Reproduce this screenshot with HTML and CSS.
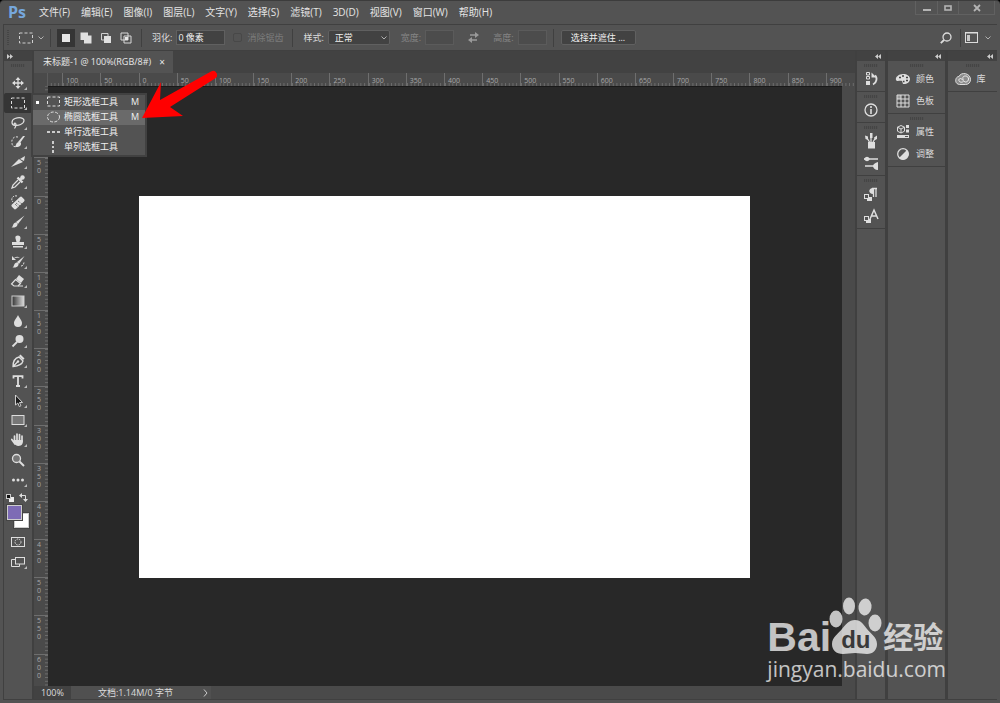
FILE: index.html
```html
<!DOCTYPE html>
<html lang="zh-CN">
<head>
  <meta charset="UTF-8">
  <meta name="viewport" content="width=device-width, initial-scale=1.0">
  <title>未标题-1</title>
  <link rel="stylesheet" href="styles.css">
</head>
<body>
  <div class="app">

    <!-- 标题栏和菜单 -->
    <header class="titlebar">
      <span class="logo">Ps</span>
      <nav class="menu">
        <a href="#">文件(F)</a>
        <a href="#">编辑(E)</a>
        <a href="#">图像(I)</a>
        <a href="#">图层(L)</a>
        <a href="#">文字(Y)</a>
        <a href="#">选择(S)</a>
        <a href="#">滤镜(T)</a>
        <a href="#">3D(D)</a>
        <a href="#">视图(V)</a>
        <a href="#">窗口(W)</a>
        <a href="#">帮助(H)</a>
      </nav>
      <div class="window-buttons">
        <button aria-label="最小化"><svg width="8" height="8" viewBox="0 0 8 8"><path d="M0 6h8" stroke="#b4b4b4" stroke-width="2"/></svg></button>
        <button aria-label="最大化"><svg width="8" height="8" viewBox="0 0 8 8"><rect x="1" y="2" width="6" height="4" fill="none" stroke="#b4b4b4" stroke-width="1.6"/></svg></button>
        <button class="close" aria-label="关闭"><svg width="8" height="8" viewBox="0 0 8 8"><path d="M1 1l6 6M7 1l-6 6" stroke="#b4b4b4" stroke-width="1.8"/></svg></button>
      </div>
    </header>

    <!-- 选项栏 -->
    <div class="options">
      <span class="grip-v"></span>
      <button class="preset" aria-label="工具预设">
        <svg width="14" height="12" viewBox="0 0 14 12"><rect x=".5" y="1" width="13" height="10" fill="none" stroke="#d0d0d0" stroke-dasharray="3 2"/></svg>
        <svg width="6" height="4" viewBox="0 0 6 4"><path d="M.5 .5L3 3 5.500 .5" fill="none" stroke="#b0b0b0"/></svg>
      </button>
      <span class="sep"></span>
      <div class="modes">
        <button class="active" aria-label="新选区"><svg width="12" height="12" viewBox="0 0 12 12"><rect x="2" y="2" width="8" height="8" fill="#e6e6e6"/></svg></button>
        <button aria-label="添加到选区"><svg width="12" height="12" viewBox="0 0 12 12"><path d="M.5 .5h7.500v3h3.500v8H4V8H.5z" fill="#e0e0e0"/></svg></button>
        <button aria-label="从选区减去"><svg width="12" height="12" viewBox="0 0 12 12"><path d="M4 8H1.500V1.500H8V4" fill="none" stroke="#d0d0d0"/><rect x="4" y="4" width="7" height="7" fill="#e0e0e0"/></svg></button>
        <button aria-label="与选区交叉"><svg width="12" height="12" viewBox="0 0 12 12"><path d="M1 1h7v7H1zM4 4h7v7H4z" fill="none" stroke="#d8d8d8"/><rect x="5" y="5" width="3" height="3" fill="#e8e8e8"/></svg></button>
      </div>
      <span class="sep"></span>
      <div class="field">
        <label for="feather">羽化:</label>
        <input type="text" id="feather" class="feather" value="0 像素">
      </div>
      <div class="check">
        <input type="checkbox" id="antialias" disabled>
        <label for="antialias">消除锯齿</label>
      </div>
      <span class="sep"></span>
      <div class="field">
        <label for="style">样式:</label>
        <span class="select">
          <select id="style"><option>正常</option><option>固定比例</option><option>固定大小</option></select>
          <svg width="6" height="4" viewBox="0 0 6 4"><path d="M.5 .5L3 3 5.500 .5" fill="none" stroke="#b0b0b0"/></svg>
        </span>
      </div>
      <div class="size">
        <div class="field off">
          <label for="width">宽度:</label>
          <input type="text" id="width" disabled>
        </div>
        <button class="swap" aria-label="互换" disabled><svg width="11" height="11" viewBox="0 0 11 11"><path d="M2 3h6M3 8h6" stroke="#9a9a9a" stroke-width="1.300"/><path d="M7 0l4 3-4 3zM4 5L0 8l4 3z" fill="#9a9a9a"/></svg></button>
        <div class="field off">
          <label for="height">高度:</label>
          <input type="text" id="height" disabled>
        </div>
      </div>
      <span class="sep"></span>
      <button class="mask-button">选择并遮住 ...</button>
      <div class="options-end">
        <button aria-label="搜索"><svg width="12" height="12" viewBox="0 0 12 12"><circle cx="7" cy="5" r="4" fill="none" stroke="#dcdcdc" stroke-width="1.300"/><path d="M4 8L.8 11.200" stroke="#dcdcdc" stroke-width="1.800"/></svg></button>
        <span class="sep"></span>
        <button class="workspace-button" aria-label="工作区">
          <svg width="13" height="11" viewBox="0 0 13 11"><rect x=".5" y=".5" width="12" height="10" fill="none" stroke="#dcdcdc"/><path d="M0 1h13" stroke="#dcdcdc"/><rect x="2" y="3" width="3" height="6" fill="#c8c8c8"/></svg>
          <svg width="6" height="4" viewBox="0 0 6 4"><path d="M.5 .5L3 3 5.500 .5" fill="none" stroke="#b0b0b0"/></svg>
        </button>
      </div>
    </div>

    <div class="workspace">

      <!-- 工具箱 -->
      <aside class="toolbar">
        <div class="strip left"><svg width="6" height="5" viewBox="0 0 6 5"><path d="M0 0l3 2.500L0 5zM3 0l3 2.500L3 5z" fill="#ccc"/></svg></div>
        <span class="grip"></span>
        <ul class="tools">
          <li><button aria-label="移动工具"><svg viewBox="0 0 16 16"><path d="M8 4v8M4 8h8" stroke="#dedede" stroke-width="1.300"/><path d="M8 2l2.500 3h-5zM8 14l2.500-3h-5zM2 8l3-2.500v5zM14 8l-3-2.500v5z" fill="#dedede"/></svg></button></li>
          <li class="active">
            <button aria-label="选框工具"><svg viewBox="0 0 16 16"><rect x="1.500" y="3" width="13" height="10" fill="none" stroke="#dedede" stroke-dasharray="3 2"/></svg></button>
            <div class="flyout">
              <button>
                <span class="dot"></span>
                <svg width="14" height="12" viewBox="0 0 14 12"><rect x=".5" y="1" width="12" height="9" fill="none" stroke="#ddd" stroke-dasharray="3 2"/></svg>
                <span>矩形选框工具</span><kbd>M</kbd>
              </button>
              <button class="current">
                <span></span>
                <svg width="14" height="12" viewBox="0 0 14 12"><ellipse cx="6.500" cy="6" rx="6" ry="5" fill="none" stroke="#ddd" stroke-dasharray="3 1.500"/></svg>
                <span>椭圆选框工具</span><kbd>M</kbd>
              </button>
              <button>
                <span></span>
                <svg width="14" height="12" viewBox="0 0 14 12"><path d="M0 6h3M5 6h3M10 6h3" stroke="#ccc" stroke-width="2"/></svg>
                <span>单行选框工具</span>
              </button>
              <button>
                <span></span>
                <svg width="14" height="12" viewBox="0 0 14 12"><path d="M6 0v3M6 5v2M6 9v3" stroke="#ccc" stroke-width="2"/></svg>
                <span>单列选框工具</span>
              </button>
            </div>
          </li>
          <li><button aria-label="套索工具"><svg viewBox="0 0 16 16"><path d="M5 10.500C1 10 1 5 5 3.500c4-1.500 9-1 9 2 0 3.500-6 5.500-9 4.500-1.500-.5-1-2 .3-1.800 1.500.5.700 3-.8 5.300" fill="none" stroke="#dedede" stroke-width="1.200"/></svg></button></li>
          <li><button aria-label="快速选择工具"><svg viewBox="0 0 16 16"><path d="M8 3C4 2 1 5 2 9c0 3 2 4 5 4" fill="none" stroke="#dedede" stroke-dasharray="2 1.500"/><path d="M15 2l-5 7-2-1 5-6z" fill="#dedede"/><path d="M9 8c2 0 3 2 1 4-1 1-3 1-5 1 1-1 1-5 4-5z" fill="#dedede"/></svg></button></li>
          <li><button aria-label="裁剪工具"><svg viewBox="0 0 16 16"><path d="M1 13L9 5l4 3z" fill="#dedede"/><path d="M10 5l5-3-1 5z" fill="#dedede"/></svg></button></li>
          <li><button aria-label="吸管工具"><svg viewBox="0 0 16 16"><path d="M8 6L3 11l-1 3 3-1 5-5" fill="none" stroke="#dedede" stroke-width="1.300"/><path d="M7.500 3.500l5 5M10 6l3-3" stroke="#dedede" stroke-width="2.400"/><circle cx="12.500" cy="3.500" r="2.200" fill="#dedede"/></svg></button></li>
          <li><button aria-label="修复画笔工具"><svg viewBox="0 0 16 16"><path d="M7 2C3 1 0 5 3 8" fill="none" stroke="#dedede" stroke-dasharray="2 1"/><rect x="1" y="6" width="14" height="6" rx="1.500" fill="#dedede" transform="rotate(-43 8 9)"/><path d="M6 9l4 3M8 7l4 3M5 10l3 3" stroke="#555" stroke-dasharray="1 1"/></svg></button></li>
          <li><button aria-label="画笔工具"><svg viewBox="0 0 16 16"><path d="M14.500 1.500L8 10 6 8z" fill="#dedede"/><path d="M5.500 8.500c2 0 3 2 1 4-1 1-3 1-5 1 2-1 1-4 4-5z" fill="#dedede"/></svg></button></li>
          <li><button aria-label="仿制图章工具"><svg viewBox="0 0 16 16"><path d="M6 2c2-1.500 5 0 4.500 2.500L9.500 8H14v3H2V8h4.500L5.500 4.500C5.300 3.500 5.300 2.600 6 2zM3 12h10v1.500H3z" fill="#dedede"/></svg></button></li>
          <li><button aria-label="历史记录画笔工具"><svg viewBox="0 0 16 16"><path d="M14.500 2L9 10 7 8z" fill="#dedede"/><path d="M6.500 8.500c2 0 3 2 1 4-1 1-3 1-5 1 2-1 1-4 4-5z" fill="#dedede"/><path d="M2 2v4h4zM4 4c2-1.500 4-1.500 6-.5" fill="#dedede"/><path d="M11 12c2 0 3-2 3-4" fill="none" stroke="#dedede" stroke-dasharray="2 1"/></svg></button></li>
          <li><button aria-label="橡皮擦工具"><svg viewBox="0 0 16 16"><path d="M9 2l5 4-3 4-5-4z" fill="#dedede"/><path d="M5.500 6.500l5 4L8 13H4l-2.500-2z" fill="none" stroke="#dedede" stroke-width="1.200"/><path d="M8 13h5" stroke="#dedede"/></svg></button></li>
          <li><button aria-label="渐变工具"><svg viewBox="0 0 16 16"><defs><linearGradient id="grad"><stop offset="0" stop-color="#333"/><stop offset="1" stop-color="#ddd"/></linearGradient></defs><rect x="2" y="3" width="12" height="10" fill="url(#grad)" stroke="#ccc"/></svg></button></li>
          <li><button aria-label="模糊工具"><svg viewBox="0 0 16 16"><path d="M8 2c1 3 4 5 4 8a4 4 0 01-8 0c0-3 3-5 4-8z" fill="#dedede"/></svg></button></li>
          <li><button aria-label="减淡工具"><svg viewBox="0 0 16 16"><circle cx="9.500" cy="6" r="4" fill="#dedede"/><path d="M7 9l-4.500 4.500" stroke="#dedede" stroke-width="1.800"/></svg></button></li>
          <li><button aria-label="钢笔工具"><svg viewBox="0 0 16 16"><path d="M3 13.500C3 9 5 5 9 4l4 4c-1 4-5 5-10 5.500zL8 8.500" fill="none" stroke="#dedede" stroke-width="1.300"/><circle cx="8" cy="8.500" r="1.200" fill="#dedede"/><path d="M9 3l1.500-1.500 4 4L13 7z" fill="#dedede"/></svg></button></li>
          <li><button aria-label="文字工具"><svg viewBox="0 0 16 16"><path d="M3.500 5.500V3.200h9v2.300M8 3v10M6 13h4" fill="none" stroke="#dedede" stroke-width="1.800"/></svg></button></li>
          <li><button aria-label="路径选择工具"><svg viewBox="0 0 16 16"><path d="M5.500 2v10l2.300-2 1.500 3.500 1.600-.7L9.500 9.500h3z" fill="#1c1c1c" stroke="#dedede" stroke-width=".9"/></svg></button></li>
          <li><button aria-label="矩形工具"><svg viewBox="0 0 16 16"><rect x="2" y="3.500" width="12" height="9" fill="#777" stroke="#dedede"/></svg></button></li>
          <li><button aria-label="抓手工具"><svg viewBox="0 0 16 16"><path d="M4.500 9V4M7 8V2M9.500 8V2.500M12 8V4M5 12L1.800 7.500" stroke="#dedede" stroke-width="1.700" stroke-linecap="round"/><path d="M3.700 8h9.200c.5 3-1 6-4.400 6C6 14 4.500 12 3.700 10z" fill="#dedede"/></svg></button></li>
          <li class="plain"><button aria-label="缩放工具"><svg viewBox="0 0 16 16"><circle cx="6.500" cy="6.500" r="4" fill="#777" stroke="#dedede" stroke-width="1.300"/><path d="M9.500 9.500l4.500 4.500" stroke="#dedede" stroke-width="2"/></svg></button></li>
          <li><button aria-label="编辑工具栏"><svg viewBox="0 0 16 16"><g fill="#dedede"><circle cx="3.500" cy="8" r="1.500"/><circle cx="8" cy="8" r="1.500"/><circle cx="12.500" cy="8" r="1.500"/></g></svg></button></li>
        </ul>
        <div class="colors">
          <div class="color-buttons">
            <button aria-label="默认颜色"><svg width="8" height="8" viewBox="0 0 8 8"><rect x="3" y="3" width="5" height="5" fill="#eee"/><rect x=".5" y=".5" width="4" height="4" fill="#111" stroke="#ccc"/></svg></button>
            <button aria-label="切换颜色"><svg width="9" height="9" viewBox="0 0 9 9"><path d="M2 2.500h4.500V7" fill="none" stroke="#dedede"/><path d="M3 0v5L0 2.500zM4 6h5L6.500 9z" fill="#dedede"/></svg></button>
          </div>
          <div class="swatches">
            <button class="background" aria-label="背景色"></button>
            <button class="foreground" aria-label="前景色"></button>
          </div>
        </div>
        <ul class="tools modes-list">
          <li class="plain"><button aria-label="快速蒙版"><svg viewBox="0 0 16 16"><rect x="1.500" y="3.500" width="13" height="9" fill="none" stroke="#dedede"/><circle cx="8" cy="8" r="3" fill="none" stroke="#dedede" stroke-dasharray="1.500 1"/></svg></button></li>
          <li><button aria-label="屏幕模式"><svg viewBox="0 0 16 16"><path d="M5 5.500H1.500v7h8V10" fill="none" stroke="#dedede"/><rect x="5.500" y="3.500" width="9" height="6.500" fill="#535353" stroke="#dedede"/></svg></button></li>
        </ul>
      </aside>

      <!-- 文档 -->
      <main class="document">
        <div class="tabs">
          <div class="tab"><span>未标题-1 @ 100%(RGB/8#)</span><button aria-label="关闭文档">×</button></div>
        </div>
        <div class="ruler-corner"></div>
        <div class="ruler ruler-x"><div class="track" id="ruler-x"></div></div>
        <div class="ruler ruler-y"><div class="track" id="ruler-y"></div></div>
        <div class="stage"><div class="canvas"></div></div>
        <div class="scrollbar"></div>
        <footer class="status">
          <span class="zoom">100%</span>
          <span class="doc-size">文档:1.14M/0 字节</span>
          <button aria-label="更多"><svg width="5" height="8" viewBox="0 0 5 8"><path d="M1 .5l3 3.500-3 3.500" fill="none" stroke="#ccc"/></svg></button>
        </footer>
      </main>

      <!-- 右侧面板 -->
      <aside class="dock dock-icons">
        <div class="strip"><svg width="6" height="5" viewBox="0 0 6 5"><path d="M3 0L0 2.500 3 5zM6 0L3 2.500 6 5z" fill="#ccc"/></svg></div>
        <section>
          <span class="grip"></span>
          <button aria-label="历史记录"><svg viewBox="0 0 16 16"><path d="M3.500 1.500h3v2.500h-3zM3.500 5.500h3V8h-3z" fill="none" stroke="#dedede"/><rect x="3" y="10" width="4" height="4" fill="#dedede"/><path d="M10 13.500c4-2 4.500-7 2-9" fill="none" stroke="#dedede" stroke-width="1.800"/><path d="M8.500 1.500v5h5z" fill="#dedede"/></svg></button>
        </section>
        <section>
          <span class="grip"></span>
          <button aria-label="信息"><svg viewBox="0 0 16 16"><circle cx="8" cy="8" r="6" fill="none" stroke="#dedede" stroke-width="1.300"/><path d="M8 7v5M8 4v2" stroke="#dedede" stroke-width="1.600"/></svg></button>
        </section>
        <section>
          <span class="grip"></span>
          <button aria-label="画笔"><svg viewBox="0 0 16 16"><path d="M5 9h7v6.500H5z" fill="#dedede"/><path d="M8 9V2M6.500 9L4 5M10 9l2.500-4" stroke="#dedede" stroke-width="1.300"/><path d="M7 0h2.500v5H7zM2 2.500l3 1v3.500L2.500 6zM14 2.500l-3 2 1 2.500 2-1z" fill="#dedede"/></svg></button>
          <button aria-label="画笔预设"><svg viewBox="0 0 16 16"><path d="M1 4h14M2 11h9" stroke="#dedede" stroke-width="1.500"/><path d="M1 4c2-3 4-3 6 0-2 3-4 3-6 0zM15 7v8c-3 0-5-2-5-4s2-3 5-4z" fill="#dedede"/></svg></button>
        </section>
        <section>
          <span class="grip"></span>
          <button aria-label="段落"><svg viewBox="0 0 16 16"><path d="M10.500 2v9M13 2v9M9 2.500h5" stroke="#dedede" stroke-width="1.300"/><path d="M10 2c-5 0-5 6 0 6z" fill="#dedede"/><rect x="1.500" y="8.500" width="4" height="4" fill="#535353" stroke="#dedede"/><path d="M6 11h3v4H4v-2h2z" fill="#dedede"/></svg></button>
          <button aria-label="字符"><svg viewBox="0 0 16 16"><path d="M7 11l4-9 4 9M8.500 8h5" fill="none" stroke="#dedede" stroke-width="1.500"/><rect x="1.500" y="8.500" width="4" height="4" fill="#535353" stroke="#dedede"/><path d="M6 11h2v4H3v-2h3z" fill="#dedede"/></svg></button>
        </section>
      </aside>
      <aside class="dock dock-panels">
        <div class="strip"><svg width="6" height="5" viewBox="0 0 6 5"><path d="M3 0L0 2.500 3 5zM6 0L3 2.500 6 5z" fill="#ccc"/></svg></div>
        <section>
          <span class="grip"></span>
          <button><svg viewBox="0 0 16 16"><path d="M8 3c4 0 7 2 7 5s-3 5-6 5c-2 0-1-2-2-3-2-1-5 1-6-1C0 6 4 3 8 3z" fill="#dedede"/><path d="M4 6.500h2M7 5h2M11 6.500h2M11 9.500h2M8 10.500h1.500" stroke="#444" stroke-width="1.600"/></svg><span>颜色</span></button>
          <button><svg viewBox="0 0 16 16"><path d="M2 2h4v4H2z" fill="#999"/><path d="M2 2h12v12H2zM6 2v12M10 2v12M2 6h12M2 10h12" fill="none" stroke="#dedede"/></svg><span>色板</span></button>
        </section>
        <section>
          <span class="grip"></span>
          <button><svg viewBox="0 0 16 16"><path d="M6 1.500l3.500 1.700v4L6 9 2.500 7.200v-4zM2.500 3.200L6 5l3.500-1.800M6 5v4" fill="none" stroke="#dedede"/><path d="M11 1h3v3h-3zM11 5.500h3v3h-3zM2 11h12v3H2z" fill="#dedede"/><path d="M10 12.500h3" stroke="#555"/></svg><span>属性</span></button>
          <button><svg viewBox="0 0 16 16"><circle cx="8" cy="8" r="5.300" fill="none" stroke="#dedede" stroke-width="1.300"/><path d="M12 4a5.500 5.500 0 01-8 8z" fill="#dedede"/></svg><span>调整</span></button>
        </section>
      </aside>
      <aside class="dock dock-library">
        <div class="strip"><svg width="6" height="5" viewBox="0 0 6 5"><path d="M3 0L0 2.500 3 5zM6 0L3 2.500 6 5z" fill="#ccc"/></svg></div>
        <section>
          <span class="grip"></span>
          <button><svg viewBox="0 0 16 16"><path d="M4.500 13.500C-1 13 0 5.500 4 5.500c2-5 11.500-3.500 11.500 3 0 3-2 5-5 5z" fill="#8c8c8c" stroke="#dedede"/><path d="M8.500 10.500c-4 2.500-6.500-2.500-3-3 2 0 3 3.500 5 3.500 4 0 4-6 0-6-2.500 0-3.500 2-2 3.500" fill="none" stroke="#eee"/></svg><span>库</span></button>
        </section>
      </aside>
    </div>

    <!-- 指示箭头 -->
    <svg class="arrow" width="76" height="52" viewBox="0 0 76 52"><path d="M1 48L20 12l-1 18L70 1.500a4 4 0 014 7L29 37l13 9z" fill="#f00"/></svg>

    <!-- 水印 -->
    <div class="watermark">
      <div class="brand">
        <span class="bai">Bai</span>
        <span class="paw">
          <svg width="54" height="58" viewBox="0 0 54 58"><g fill="currentColor"><ellipse cx="7" cy="22" rx="6.500" ry="8.500"/><ellipse cx="20" cy="9" rx="6" ry="8.500"/><ellipse cx="36" cy="10" rx="6.500" ry="8.500" transform="rotate(8 36 10)"/><ellipse cx="46" cy="26" rx="6.500" ry="8.500"/><path d="M26 23c6 0 9 5 12 9s10 8 10 15c0 6-4 10-10 10-4 0-8-1-12-1s-8 1-12 1c-7 0-11-4-11-10 0-7 7-11 10-15s7-9 13-9z"/></g></svg>
          <span class="du">du</span>
        </span>
        <span class="jingyan">经验</span>
      </div>
      <div class="site">jingyan.baidu.com</div>
    </div>
  </div>
  <script src="script.js"></script>
</body>
</html>
```
FILE: styles.css
```css
/* 整体 */
* {
  box-sizing: border-box;
}

body {
  margin: 0;
  background: #000;
  color: #dcdcdc;
  font-family: "Open Sans", "Noto Sans CJK SC", sans-serif;
  font-size: 9px;
  line-height: 14px;
}

button, input, select {
  margin: 0;
  padding: 0;
  border: none;
  background: none;
  color: inherit;
  font: inherit;
}

button {
  display: flex;
  align-items: center;
  justify-content: center;
}

svg {
  display: block;
  flex: none;
}

.app {
  position: relative;
  display: flex;
  flex-direction: column;
  height: 100vh;
  padding: 0 3px 3px;
  border-top: 1px solid #3c3c3c;
  border-radius: 4px 4px 0 0;
  background: #535353;
  overflow: hidden;
}

/* 标题栏 */
.titlebar {
  display: flex;
  height: 23px;
  flex: none;
}

.logo {
  width: 36px;
  padding-left: 5px;
  color: #76a7dc;
  font-size: 16px;
  font-weight: bold;
  line-height: 22px;
}

.menu {
  display: flex;
  gap: 11px;
  font-size: 10px;
  line-height: 23px;
}

.menu a {
  color: #e4e4e4;
  text-decoration: none;
}

.window-buttons {
  display: flex;
  height: 14px;
  margin-left: auto;
  margin-right: 2px;
  border: 1px solid #616161;
  border-top: none;
}

.window-buttons button {
  width: 21px;
}

.window-buttons button + button {
  border-left: 1px solid #616161;
}

.window-buttons .close {
  width: 36px;
}

/* 选项栏 */
.options {
  display: flex;
  align-items: center;
  height: 27px;
  flex: none;
  border: 1px solid #404040;
  border-right: none;
}

.grip-v {
  width: 2px;
  height: 16px;
  margin: 0 10px 0 3px;
  background: repeating-linear-gradient(#454545 0 1px, #535353 1px 2px);
}

.preset {
  gap: 5px;
}

.sep {
  width: 1px;
  height: 18px;
  margin: 0 10px 0 6px;
  background: #404040;
}

.preset + .sep {
  margin-right: 6px;
}

.modes {
  display: flex;
  gap: 2px;
}

.modes button {
  width: 18px;
  height: 18px;
}

.modes .active {
  background: #353535;
}

.field {
  display: flex;
  align-items: center;
  gap: 4px;
}

.field input, .select select {
  height: 15px;
  padding: 0 1px;
  border: 1px solid #606060;
  background: #424242;
  color: #f0f0f0;
}

.field .feather {
  width: 49px;
}

.off {
  color: #858585;
}

.off input {
  width: 29px;
  background: #4c4c4c;
  border-color: #5b5b5b;
}

.check {
  display: flex;
  align-items: center;
  gap: 5px;
  margin: 0 3px 0 8px;
  color: #7c7c7c;
}

.check input {
  appearance: none;
  width: 9px;
  height: 9px;
  border: 1px solid #484848;
  border-radius: 2px;
}

.select {
  position: relative;
}

.select select {
  display: block;
  appearance: none;
  width: 62px;
  padding-left: 6px;
  border-radius: 2px;
}

.select svg {
  position: absolute;
  right: 3px;
  top: 6px;
  pointer-events: none;
}

.size {
  display: flex;
  align-items: center;
  gap: 14px;
  margin-left: 11px;
}

.mask-button {
  width: 75px;
  height: 15px;
  margin-left: -3px;
  border: 1px solid #606060;
  border-radius: 2px;
  background: #424242;
  color: #f0f0f0;
}

.options-end {
  display: flex;
  align-items: center;
  margin-left: auto;
  padding-right: 6px;
}

.options-end .sep {
  margin: 0 4px 0 8px;
}

.workspace-button {
  gap: 7px;
}

/* 工作区 */
.workspace {
  display: flex;
  flex: 1;
  min-height: 0;
  border-left: 1px solid #404040;
  border-bottom: 1px solid #404040;
  background: #404040;
}

.strip {
  display: flex;
  align-items: center;
  justify-content: flex-end;
  height: 10px;
  padding-right: 4px;
  background: #424242;
}

.strip.left {
  justify-content: flex-start;
  padding-left: 3px;
}

.grip {
  display: block;
  width: 14px;
  height: 3px;
  margin: 3px auto 2px;
  background: repeating-linear-gradient(90deg, #454545 0 1px, #505050 1px 2px);
}

/* 工具箱 */
.toolbar {
  width: 28px;
  flex: none;
  background: #535353;
}

.toolbar > .grip {
  margin-bottom: 6px;
}

.tools {
  display: grid;
  grid-auto-rows: 1fr;
  height: 417px;
  margin: 0;
  padding: 0;
  list-style: none;
}

.tools.modes-list {
  height: 40px;
}

.tools li {
  position: relative;
}

.tools li > button {
  width: 100%;
  height: 100%;
}

.tools li > button svg {
  width: 16px;
  height: 16px;
}

.tools li::after {
  content: "";
  position: absolute;
  right: 5px;
  bottom: 3px;
  border-left: 3px solid transparent;
  border-bottom: 3px solid #bbb;
}

.tools .plain::after {
  display: none;
}

.tools .active > button {
  border-radius: 2px;
  background: #353535;
}

.flyout {
  position: absolute;
  z-index: 2;
  left: 27px;
  top: 0;
  width: 116px;
  border: 2px solid #414141;
  background: #535353;
}

.flyout button {
  display: grid;
  grid-template-columns: 3px 14px 1fr 10px;
  column-gap: 3px;
  width: 100%;
  height: 15px;
  padding: 0 4px 0 3px;
  color: #f0f0f0;
  text-align: left;
}

.flyout svg {
  margin-left: 5px;
}

.flyout svg + span {
  padding-left: 5px;
}

.flyout .current {
  background: #6a6a6a;
}

.flyout .dot {
  width: 3px;
  height: 3px;
  background: #fff;
}

.flyout kbd {
  font: inherit;
}

/* 前景色 / 背景色 */
.colors {
  height: 42px;
  padding-top: 3px;
}

.color-buttons {
  display: flex;
  justify-content: space-between;
  padding: 0 4px 0 2px;
}

.swatches {
  position: relative;
  width: 22px;
  height: 23px;
  margin: 3px;
}

.swatches button {
  position: absolute;
  width: 15px;
  height: 15px;
  border: 1px solid #ccc;
  outline: 1px solid #444;
}

.swatches .foreground {
  left: 0;
  top: 0;
  background: #7d6bb5;
}

.swatches .background {
  right: 0;
  bottom: 0;
  background: #fff;
}

/* 文档窗口 */
.document {
  display: grid;
  grid-template-columns: 14px minmax(0, 1fr) 13px;
  grid-template-rows: 22px 13px minmax(0, 1fr) 13px;
  flex: 1;
  min-width: 0;
  margin: 0 2px;
  background: #4a4a4a;
}

.tabs {
  grid-column: 1 / -1;
  display: flex;
  background: #424242;
}

.tab {
  display: flex;
  align-items: center;
  gap: 8px;
  padding: 0 8px 0 9px;
  background: #535353;
  color: #e8e8e8;
}

.tab button {
  font-size: 10px;
}

.ruler-corner {
  border-right: 1px solid #5c5c5c;
}

.ruler {
  overflow: hidden;
  color: #a8a8a8;
  font-size: 7px;
  line-height: 8px;
}

.ruler-x {
  grid-column: 2 / -1;
}

.track {
  display: grid;
}

/* 100% 缩放：每 50 个单位一格 */
.ruler-x .track {
  grid-auto-flow: column;
  grid-auto-columns: 1fr;
  width: 840px;
  height: 13px;
  margin-left: -24px;
}

.ruler-y .track {
  grid-auto-rows: 1fr;
  width: 14px;
  height: 649px;
  margin-top: -5px;
}

.ruler-x .track span {
  padding: 4px 0 0 3px;
  border-left: 1px solid #6e6e6e;
  background: linear-gradient(90deg, #6e6e6e 1px, transparent 1px) 0 100% / 10% 3px repeat-x;
}

.ruler-y .track span {
  padding: 1px 7px 0 3px;
  border-top: 1px solid #6e6e6e;
  background: linear-gradient(#6e6e6e 1px, transparent 1px) 100% 0 / 3px 10% repeat-y;
  overflow-wrap: anywhere;
}

.stage {
  display: flex;
  align-items: center;
  justify-content: center;
  padding-right: 2px;
  border-top: 1px solid #1a1a1a;
  background: #282828;
}

.canvas {
  width: 611px;
  height: 382px;
  background: #fff;
}

.status {
  grid-column: 1 / -1;
  display: flex;
  line-height: 13px;
}

.zoom {
  width: 37px;
  padding-left: 7px;
  background: #424242;
}

.doc-size {
  width: 128px;
  padding-left: 27px;
  background: #505050;
}

.status button {
  width: 12px;
  background: #505050;
}

/* 右侧面板 */
.dock {
  flex: none;
  background: #535353;
}

.dock + .dock {
  margin-left: 3px;
}

.dock-icons {
  width: 28px;
}

.dock-panels {
  width: 57px;
}

.dock-library {
  width: 49px;
}

.dock section {
  padding-bottom: 1px;
  border-bottom: 1px solid #404040;
}

.dock .grip {
  height: 7px;
  margin: 0 auto;
  border-top: 3px solid #535353;
  border-bottom: 1px solid #535353;
}

.dock section button {
  width: 100%;
  height: 22px;
  gap: 5px;
}

.dock-panels section button,
.dock-library section button {
  padding-right: 4px;
}

.dock section button svg {
  width: 16px;
  height: 16px;
}

/* 箭头 */
.arrow {
  position: absolute;
  z-index: 3;
  left: 141px;
  top: 69px;
}

/* 水印 */
.watermark {
  position: absolute;
  right: 54px;
  bottom: 20px;
  color: #fff;
  opacity: .72;
}

.brand {
  display: flex;
  align-items: flex-end;
  height: 58px;
  font-family: "Liberation Sans", "Noto Sans CJK SC", sans-serif;
  font-weight: bold;
}

.bai {
  margin-right: -2px;
  font-size: 41px;
  line-height: 36px;
}

.paw {
  position: relative;
}

.du {
  position: absolute;
  left: 12px;
  bottom: 3px;
  color: #333;
  font-size: 24px;
  line-height: 24px;
}

.jingyan {
  font-size: 30px;
  line-height: 34px;
}

.site {
  font-size: 21px;
  font-weight: 500;
  line-height: 28px;
}
```
FILE: script.js
```js
function fillRuler(id, first, last, end) {
  const track = document.getElementById(id);
  for (let value = first - 50; value <= end; value += 50) {
    const cell = document.createElement('span');
    if (value >= first && value <= last) {
      cell.innerText = Math.abs(value);
    }
    track.appendChild(cell);
  }
}

fillRuler('ruler-x', -100, 900, 900);
fillRuler('ruler-y', -100, 600, 650);
```
